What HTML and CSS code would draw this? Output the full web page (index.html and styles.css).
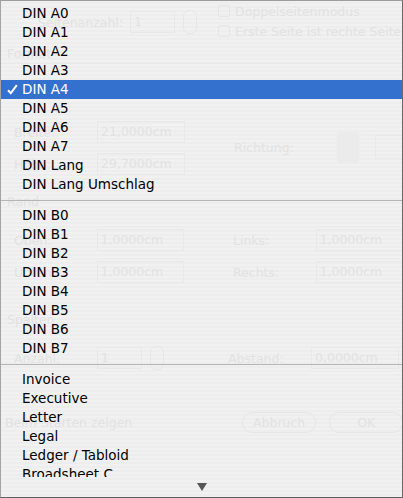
FILE: index.html
```html
<!DOCTYPE html>
<html lang="de">
<head>
  <meta charset="UTF-8">
  <title>Dokument einrichten - Format</title>
  <link rel="stylesheet" href="styles.css">
</head>
<body>

  <div class="screen">
    <!-- dialog behind the popup menu, seen through it -->
    <div class="dialog">
      <div class="top-row">
        <span class="lbl-wide">Seitenanzahl:</span>
        <span class="field field-small">1</span>
        <span class="stepper"></span>
        <div class="checks">
          <div class="check"><span class="box"></span>Doppelseitenmodus</div>
          <div class="check"><span class="box"></span>Erste Seite ist rechte Seite</div>
        </div>
      </div>

      <div class="group-title format-title">Format</div>
      <div class="format-block">
        <div class="format-fields">
          <div class="row"><span class="lbl">Breite:</span><span class="field">21,0000cm</span></div>
          <div class="row"><span class="lbl">Höhe:</span><span class="field">29,7000cm</span></div>
        </div>
        <div class="richtung">
          <span class="lbl">Richtung:</span>
          <span class="orient portrait"></span>
          <span class="orient landscape"></span>
        </div>
      </div>

      <div class="group-title">Rand</div>
      <div class="row row-first"><span class="lbl">Oben:</span><span class="field">1,0000cm</span><span class="lbl lbl-right">Links:</span><span class="field">1,0000cm</span></div>
      <div class="row"><span class="lbl">Unten:</span><span class="field">1,0000cm</span><span class="lbl lbl-right">Rechts:</span><span class="field">1,0000cm</span></div>

      <div class="group-title spalten-title">Spalten</div>
      <div class="row row-first"><span class="lbl">Anzahl:</span><span class="field field-small">1</span><span class="stepper"></span><span class="lbl lbl-right lbl-after-step">Abstand:</span><span class="field">0,0000cm</span></div>

      <div class="bottom-bar">
        <span class="start-check">Beim Starten zeigen</span>
        <span class="btn">Abbruch</span>
        <span class="btn btn-ok">OK</span>
      </div>
    </div>

    <!-- the open popup menu -->
    <div class="menu">
      <ul class="menu-list">
        <li>DIN A0</li>
        <li>DIN A1</li>
        <li>DIN A2</li>
        <li>DIN A3</li>
        <li class="selected">
          <svg class="tick" width="11" height="11" viewBox="0 0 11 11"><path d="M1 6.2 L3.8 9.2 L9.8 1.2" fill="none" stroke="#fff" stroke-width="2"/></svg>
          DIN A4
        </li>
        <li>DIN A5</li>
        <li>DIN A6</li>
        <li>DIN A7</li>
        <li>DIN Lang</li>
        <li>DIN Lang Umschlag</li>
        <li class="sep"></li>
        <li>DIN B0</li>
        <li>DIN B1</li>
        <li>DIN B2</li>
        <li>DIN B3</li>
        <li>DIN B4</li>
        <li>DIN B5</li>
        <li>DIN B6</li>
        <li>DIN B7</li>
        <li class="sep"></li>
        <li>Invoice</li>
        <li>Executive</li>
        <li>Letter</li>
        <li>Legal</li>
        <li>Ledger / Tabloid</li>
        <li>Broadsheet C</li>
      </ul>
      <div class="scroll-down"><span class="arrow"></span></div>
    </div>
  </div>

</body>
</html>
```

FILE: styles.css
```css
html, body {
  margin: 0;
  padding: 0;
}
body {
  font-family: "DejaVu Sans", "Lucida Grande", sans-serif;
  font-size: 13.5px;
  background: #efefef;
}
.screen {
  position: relative;
  width: 403px;
  height: 498px;
  overflow: hidden;
  background: repeating-linear-gradient(#f0f0f0 0 2px, #ebebeb 2px 4px);
}

/* ghost dialog */
.dialog {
  height: 100%;
  color: #dcdcdc;
  font-size: 12.5px;
  white-space: nowrap;
}
.top-row {
  display: flex;
  align-items: center;
  height: 44px;
  padding-left: 38px;
}
.lbl-wide {
  width: 92px;
}
.field {
  box-sizing: border-box;
  display: inline-block;
  width: 88px;
  height: 22px;
  line-height: 20px;
  padding-left: 3px;
  border: 1px solid #e4e4e4;
}
.field-small {
  width: 45px;
}
.stepper {
  display: inline-block;
  width: 12px;
  height: 22px;
  margin-left: 8px;
  border: 1px solid #e2e2e2;
  border-radius: 6px;
}
.checks {
  margin-left: 21px;
  display: flex;
  flex-direction: column;
  gap: 5px;
  margin-top: -2px;
}
.check {
  display: flex;
  align-items: center;
  gap: 5px;
  height: 15px;
}
.box {
  width: 10px;
  height: 10px;
  border: 1px solid #e0e0e0;
  border-radius: 2px;
}
.group-title {
  padding-left: 7px;
  height: 16px;
  line-height: 16px;
  margin-top: 14px;
}
.format-title {
  margin-top: 2px;
  border-bottom: 1px solid #e6e6e6;
  padding-bottom: 1px;
}
.spalten-title {
  margin-top: 24px;
}
.row {
  display: flex;
  align-items: center;
  height: 32px;
  padding-left: 14px;
}
.row-first {
  margin-top: 14px;
}
.lbl {
  width: 83px;
}
.lbl-right {
  margin-left: 49px;
}
.lbl-after-step {
  margin-left: 64px;
}
.format-block {
  display: flex;
  margin-top: 52px;
}
.richtung {
  display: flex;
  align-items: center;
  margin-left: 49px;
  margin-top: -2px;
}
.orient {
  display: inline-block;
  background: #e8e8e8;
}
.portrait {
  width: 22px;
  height: 30px;
  margin-left: 20px;
}
.landscape {
  width: 28px;
  height: 22px;
  margin-left: 16px;
  background: none;
  border: 1px solid #e6e6e6;
}
.bottom-bar {
  display: flex;
  align-items: center;
  height: 38px;
  margin-top: 29px;
  padding-left: 5px;
}
.start-check {
  width: 258px;
}
.btn {
  box-sizing: border-box;
  width: 81px;
  height: 21px;
  line-height: 19px;
  text-align: center;
  border: 1px solid #e2e2e2;
  border-radius: 10px;
}
.btn-ok {
  margin-left: 13px;
  width: 80px;
}

/* popup menu */
.menu {
  position: absolute;
  top: 0;
  left: 0;
  right: 0;
  bottom: 0;
  border-top: 1px solid #9c9c9c;
  border-left: 1px solid #a4a4a4;
  border-right: 1px solid #6a6a6a;
  border-bottom: 1px solid #5e5e5e;
  background: rgba(244, 244, 244, 0.25);
  display: flex;
  flex-direction: column;
}
.menu-list {
  list-style: none;
  margin: 0;
  padding: 3px 0 0;
  height: 476px;
  box-sizing: border-box;
  overflow: hidden;
  color: #000;
}
.menu-list li {
  position: relative;
  height: 19px;
  line-height: 19px;
  padding-left: 21px;
}
.menu-list li.selected {
  background: #3470cd;
  color: #fff;
}
.tick {
  position: absolute;
  left: 6px;
  top: 4px;
}
.menu-list li.sep {
  box-sizing: border-box;
  height: 12px;
  padding: 6px 0 0;
}
.menu-list li.sep::after {
  content: "";
  display: block;
  height: 1px;
  background: #b4b4b4;
}
.scroll-down {
  flex: 1;
  display: flex;
  justify-content: center;
  padding-top: 6px;
}
.arrow {
  width: 0;
  height: 0;
  border-left: 5px solid transparent;
  border-right: 5px solid transparent;
  border-top: 8px solid #555;
}
```
